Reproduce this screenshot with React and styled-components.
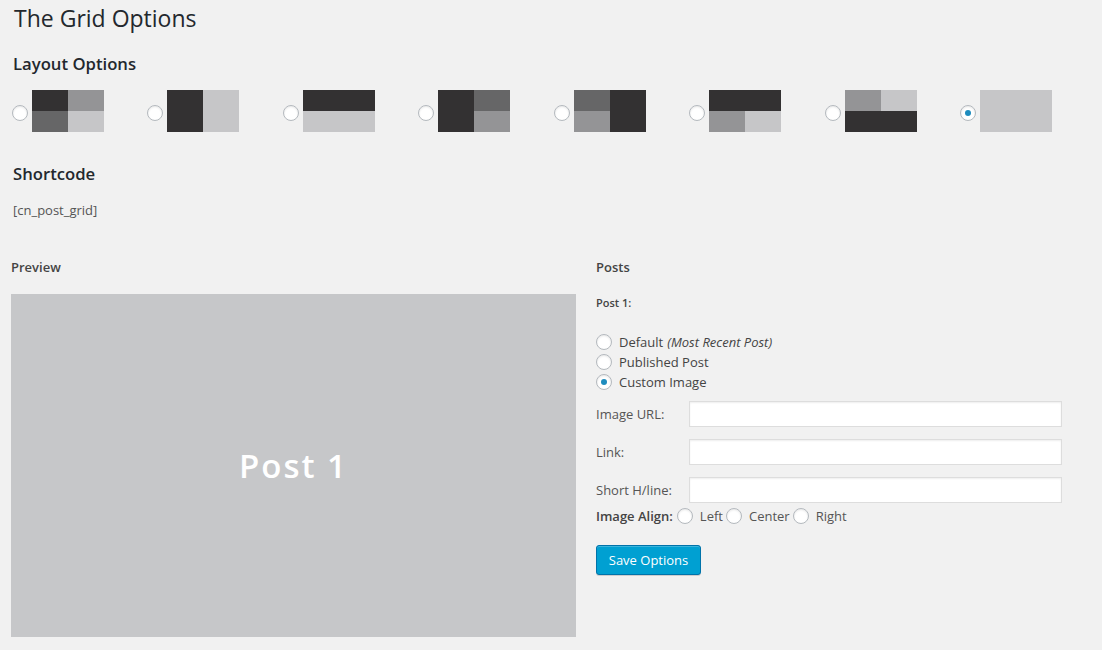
import React from 'react';
import styled, { createGlobalStyle } from 'styled-components';

const GlobalStyle = createGlobalStyle`
   html, body {
      margin: 0;
      padding: 0;
      background: #f1f1f1;
   }
   body {
      font-family: 'Open Sans', 'Noto Sans', sans-serif;
      color: #444;
      font-size: 13px;
   }
`;

const Page = styled.div`
   width: 1102px;
   height: 650px;
   overflow: hidden;
   background: #f1f1f1;
`;

const Top = styled.div`
   padding: 4px 0 0 12px;
`;

const Title = styled.h1`
   margin: 0 0 0 2px;
   font-size: 23px;
   line-height: 29px;
   font-weight: 400;
   color: #23282d;
`;

const SectionTitle = styled.h2`
   margin: ${({ $top }) => $top}px 0 0 1px;
   font-size: 16.7px;
   line-height: 20px;
   font-weight: 600;
   color: #23282d;
`;

const LayoutRow = styled.div`
   display: flex;
   gap: 43.43px;
   margin-top: 16px;
`;

const LayoutItem = styled.label`
   display: flex;
   align-items: center;
   gap: 4px;
`;

const Radio = styled.input.attrs({ type: 'radio' })`
   appearance: none;
   -webkit-appearance: none;
   margin: 0;
   width: 16px;
   height: 16px;
   flex: none;
   border: 1px solid #b4b9be;
   border-radius: 50%;
   background: #fff;
   box-shadow: inset 0 1px 2px rgba(0, 0, 0, 0.1);
   display: inline-flex;
   align-items: center;
   justify-content: center;
   box-sizing: border-box;
   &:checked::before {
      content: '';
      width: 6px;
      height: 6px;
      border-radius: 50%;
      background: #1e8cbe;
   }
`;

const LayoutRadio = styled(Radio)`
   margin-top: 4px;
`;

const Thumb = styled.div`
   width: 72px;
   height: 42px;
   display: grid;
   grid-template-columns: 1fr 1fr;
   grid-template-rows: 1fr 1fr;
   grid-template-areas: ${({ $areas }) => $areas};
`;

const Cell = styled.div`
   grid-area: ${({ $area }) => $area};
   background: ${({ $tone }) => $tone};
`;

const DARK = '#333132';
const MID = '#666667';
const GREY = '#949496';
const LIGHT = '#c6c6c8';

const layouts = [
   { areas: '"a b" "c d"', cells: [['a', DARK], ['b', GREY], ['c', MID], ['d', LIGHT]] },
   { areas: '"a b" "a b"', cells: [['a', DARK], ['b', LIGHT]] },
   { areas: '"a a" "b b"', cells: [['a', DARK], ['b', LIGHT]] },
   { areas: '"a b" "a c"', cells: [['a', DARK], ['b', MID], ['c', GREY]] },
   { areas: '"a c" "b c"', cells: [['a', MID], ['b', GREY], ['c', DARK]] },
   { areas: '"a a" "b c"', cells: [['a', DARK], ['b', GREY], ['c', LIGHT]] },
   { areas: '"a b" "c c"', cells: [['a', GREY], ['b', LIGHT], ['c', DARK]] },
   { areas: '"a a" "a a"', cells: [['a', LIGHT]] },
];

const Shortcode = styled.p`
   margin: 17px 0 0 1px;
   font-size: 13px;
   line-height: 18px;
   color: #555;
`;

const Columns = styled.div`
   display: flex;
   gap: 20px;
   padding-left: 11px;
   margin-top: 39px;
`;

const PreviewCol = styled.div`
   width: 565px;
`;

const ColTitle = styled.h3`
   margin: 0;
   font-size: 13px;
   line-height: 18px;
   font-weight: 600;
   color: #444;
`;

const PreviewBox = styled.div`
   margin-top: 18px;
   height: 343px;
   background: #c6c7c9;
   display: flex;
   align-items: center;
   justify-content: center;
   color: #fff;
   font-size: 33px;
   font-weight: 600;
   letter-spacing: 2px;
`;

const PostsCol = styled.div`
   width: 466px;
`;

const PostLabel = styled.h4`
   margin: 19px 0 0;
   font-size: 11px;
   line-height: 16px;
   font-weight: 600;
   color: #444;
`;

const ChoiceList = styled.div`
   margin-top: 21px;
   display: flex;
   flex-direction: column;
`;

const Choice = styled.label`
   display: flex;
   align-items: center;
   gap: 7px;
   height: 20px;
   font-size: 13px;
   color: #444;
   em {
      margin-left: 4px;
   }
`;

const FieldList = styled.div`
   margin-top: 9px;
   display: flex;
   flex-direction: column;
   gap: 12px;
`;

const Field = styled.label`
   display: flex;
   align-items: center;
`;

const FieldName = styled.span`
   width: 93px;
   font-size: 13px;
   color: #555;
`;

const TextInput = styled.input.attrs({ type: 'text' })`
   width: 373px;
   height: 26px;
   box-sizing: border-box;
   margin: 0;
   border: 1px solid #ddd;
   background: #fff;
   box-shadow: inset 0 1px 2px rgba(0, 0, 0, 0.07);
   padding: 3px 5px;
   font-family: inherit;
   font-size: 13px;
`;

const AlignRow = styled.div`
   margin-top: 3px;
   height: 20px;
   display: flex;
   align-items: center;
   font-size: 13px;
   color: #555;
`;

const AlignTitle = styled.span`
   font-weight: 600;
   color: #444;
   margin-right: 4px;
`;

const AlignOption = styled.label`
   display: flex;
   align-items: center;
   gap: 7px;
   margin-right: 3px;
`;

const SaveButton = styled.button`
   margin-top: 19px;
   width: 105px;
   height: 30px;
   border: 1px solid #0073aa;
   border-radius: 3px;
   background: #00a0d2;
   box-shadow: inset 0 1px 0 rgba(120, 200, 230, 0.5), 0 1px 0 rgba(0, 0, 0, 0.15);
   color: #fff;
   font-family: inherit;
   font-size: 13px;
   cursor: pointer;
   padding: 0;
`;

const App = () => {
   return (
      <Page>
         <GlobalStyle />
         <Top>
            <Title>The Grid Options</Title>
            <SectionTitle $top={21}>Layout Options</SectionTitle>
            <LayoutRow>
               {layouts.map((l, i) => (
                  <LayoutItem key={i}>
                     <LayoutRadio name='layout' defaultChecked={i === 7} />
                     <Thumb $areas={l.areas}>
                        {l.cells.map(([area, tone]) => (
                           <Cell key={area} $area={area} $tone={tone} />
                        ))}
                     </Thumb>
                  </LayoutItem>
               ))}
            </LayoutRow>
            <SectionTitle $top={32}>Shortcode</SectionTitle>
            <Shortcode>[cn_post_grid]</Shortcode>
         </Top>
         <Columns>
            <PreviewCol>
               <ColTitle>Preview</ColTitle>
               <PreviewBox>Post 1</PreviewBox>
            </PreviewCol>
            <PostsCol>
               <ColTitle>Posts</ColTitle>
               <PostLabel>Post 1:</PostLabel>
               <ChoiceList>
                  <Choice>
                     <Radio name='post1' />
                     <span>
                        Default<em>(Most Recent Post)</em>
                     </span>
                  </Choice>
                  <Choice>
                     <Radio name='post1' />
                     Published Post
                  </Choice>
                  <Choice>
                     <Radio name='post1' defaultChecked />
                     Custom Image
                  </Choice>
               </ChoiceList>
               <FieldList>
                  <Field>
                     <FieldName>Image URL:</FieldName>
                     <TextInput />
                  </Field>
                  <Field>
                     <FieldName>Link:</FieldName>
                     <TextInput />
                  </Field>
                  <Field>
                     <FieldName>Short H/line:</FieldName>
                     <TextInput />
                  </Field>
               </FieldList>
               <AlignRow>
                  <AlignTitle>Image Align:</AlignTitle>
                  <AlignOption>
                     <Radio name='align' />
                     Left
                  </AlignOption>
                  <AlignOption>
                     <Radio name='align' />
                     Center
                  </AlignOption>
                  <AlignOption>
                     <Radio name='align' />
                     Right
                  </AlignOption>
               </AlignRow>
               <SaveButton>Save Options</SaveButton>
            </PostsCol>
         </Columns>
      </Page>
   );
};

export default App;
